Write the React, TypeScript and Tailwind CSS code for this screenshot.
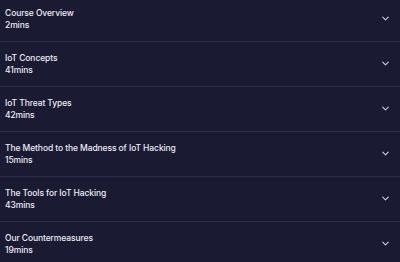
import { ChevronDown } from "lucide-react";

const lessons = [
  { title: "Course Overview", length: "2mins" },
  { title: "IoT Concepts", length: "41mins" },
  { title: "IoT Threat Types", length: "42mins" },
  { title: "The Method to the Madness of IoT Hacking", length: "15mins" },
  { title: "The Tools for IoT Hacking", length: "43mins" },
  { title: "Our Countermeasures", length: "19mins" },
];

const App = () => {
  return (
    <div
      className="w-[400px] h-[262px] overflow-hidden bg-[#1b1a33] text-[#ececf2]"
      style={{ fontFamily: "Inter, 'Noto Sans', sans-serif" }}
    >
      <div className="-mt-[3px] flex flex-col">
        {lessons.map((lesson) => (
          <div
            key={lesson.title}
            className="h-[45px] flex items-center justify-between pl-[5px] pr-[9px] border-b border-[#2d2c4b]"
          >
            <div className="flex flex-col pt-[1px]">
              <p className="text-[8.5px] leading-[11.5px] font-medium tracking-[-0.1px]">
                {lesson.title}
              </p>
              <p className="text-[8.5px] leading-[11.5px] font-medium tracking-[-0.1px]">
                {lesson.length}
              </p>
            </div>
            <ChevronDown size={11} strokeWidth={2.5} className="text-[#c9c8d6] -mt-[1px]" />
          </div>
        ))}
      </div>
    </div>
  );
};

export default App;
